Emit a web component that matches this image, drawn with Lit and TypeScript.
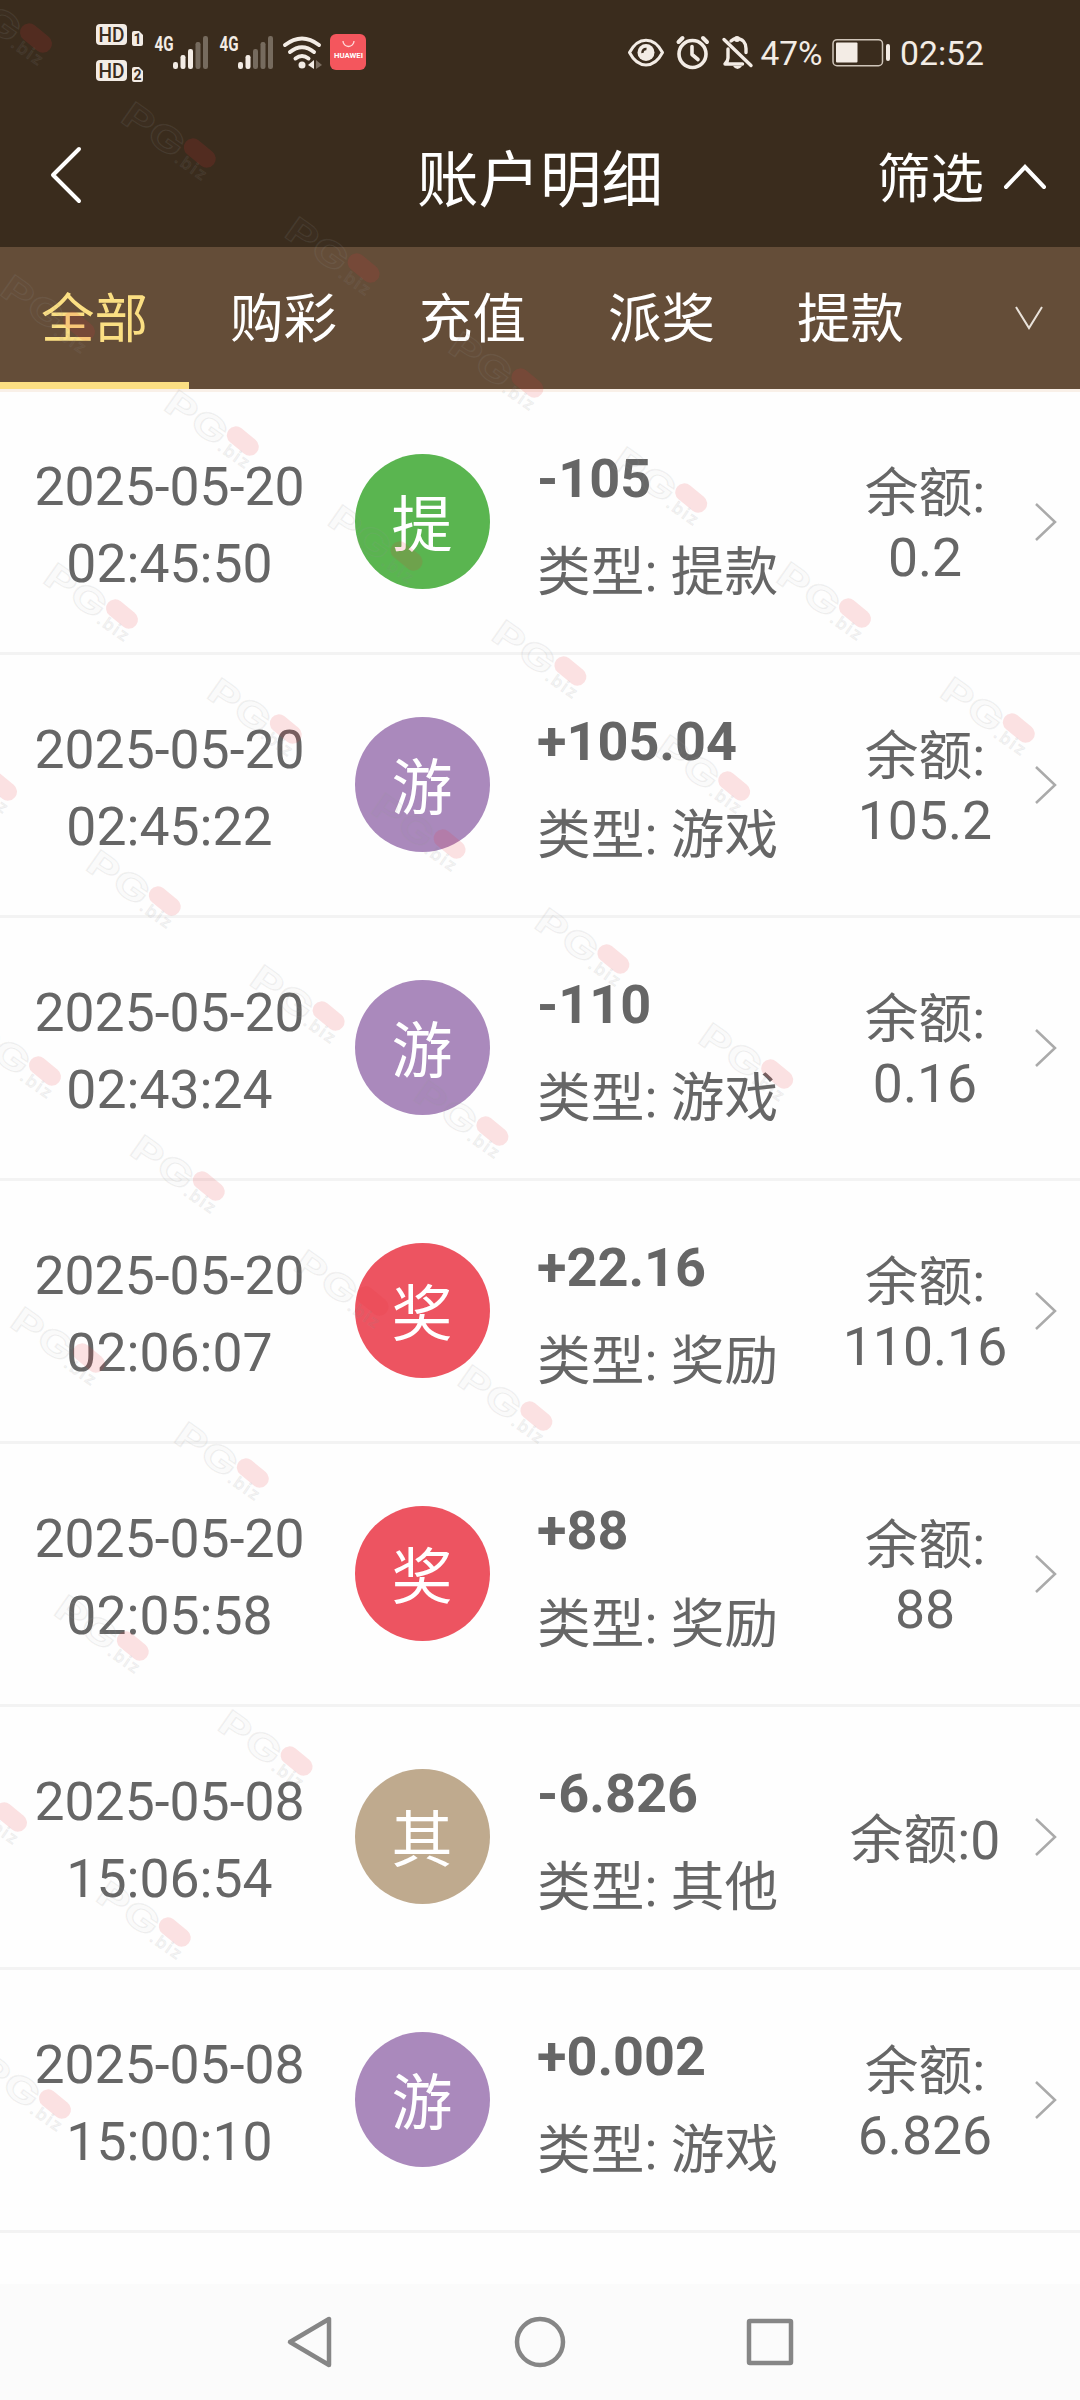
import { LitElement, html, css, svg } from "lit";
import { customElement, property } from "lit/decorators.js";

interface Entry { date: string; time: string; tag: string; tone: string; amount: string; kind: string; balance: string; inline?: boolean; }

const ENTRIES: Entry[] = [
  { date: "2025-05-20", time: "02:45:50", tag: "提", tone: "green", amount: "-105", kind: "提款", balance: "0.2" },
  { date: "2025-05-20", time: "02:45:22", tag: "游", tone: "purple", amount: "+105.04", kind: "游戏", balance: "105.2" },
  { date: "2025-05-20", time: "02:43:24", tag: "游", tone: "purple", amount: "-110", kind: "游戏", balance: "0.16" },
  { date: "2025-05-20", time: "02:06:07", tag: "奖", tone: "red", amount: "+22.16", kind: "奖励", balance: "110.16" },
  { date: "2025-05-20", time: "02:05:58", tag: "奖", tone: "red", amount: "+88", kind: "奖励", balance: "88" },
  { date: "2025-05-08", time: "15:06:54", tag: "其", tone: "tan", amount: "-6.826", kind: "其他", balance: "0", inline: true },
  { date: "2025-05-08", time: "15:00:10", tag: "游", tone: "purple", amount: "+0.002", kind: "游戏", balance: "6.826" },
];

/* Watermark pill centres: each run steps down-right from its first mark. */
const RUNS: [number, number, number][] = [
  [36, 38, 7], [79, 326, 5], [122, 614, 5], [1, 786, 4], [45, 1071, 4], [89, 1358, 2], [-31, 1531, 3], [11, 1817, 2], [55, 2104, 1],
];
const MARKS = RUNS.flatMap(([x, y, n]) => Array.from({ length: n }, (_, i) => [x + i * 163.8, y + i * 115]));

@customElement("status-bar")
export class StatusBar extends LitElement {
  static styles = css`
    :host { display: block; height: 110px; }
    svg { display: block; font-family: Roboto, sans-serif; }
  `;
  private bars(x: number, lit: number) {
    return [0, 1, 2, 3, 4].map((i) => {
      const top = [62, 55, 49, 42, 36][i];
      return svg`<rect x=${x + i * 7.5} y=${top} width="5" height=${69 - top} rx="2.2" fill="#f3ece5" opacity=${i < lit ? 1 : 0.33}/>`;
    });
  }
  render() {
    return html`<svg width="1080" height="110" viewBox="0 0 1080 110" fill="none">
      <g fill="#f3ece5">
        <rect x="96" y="24" width="31" height="21" rx="4"/><rect x="96" y="60" width="31" height="21" rx="4"/>
        <path d="M132 33q0-2 2-2h5l4 4v9q0 2-2 2h-7q-2 0-2-2zM132 69q0-2 2-2h5l4 4v9q0 2-2 2h-7q-2 0-2-2z"/>
      </g>
      <g fill="#3a2c1d" font-weight="500">
        <text x="98.500" y="42" font-size="20.500" textLength="26" lengthAdjust="spacingAndGlyphs">HD</text>
        <text x="98.500" y="78" font-size="20.500" textLength="26" lengthAdjust="spacingAndGlyphs">HD</text>
        <text x="133.500" y="44" font-size="14" font-weight="700">1</text>
        <text x="133.500" y="80" font-size="14" font-weight="700">2</text>
      </g>
      <g fill="#f3ece5" font-weight="700" font-size="20.500">
        <text x="154.500" y="51" textLength="19" lengthAdjust="spacingAndGlyphs">4G</text>
        <text x="219.500" y="51" textLength="19" lengthAdjust="spacingAndGlyphs">4G</text>
      </g>
      ${this.bars(173, 3)}${this.bars(238, 2)}
      <g stroke="#f3ece5" stroke-width="4" stroke-linecap="round">
        <path d="M285 45Q302 32 319 45M290 52Q302 42.500 314 52M295.500 58.500Q302 53.500 308.500 58.500"/>
      </g>
      <circle cx="302" cy="65" r="3.500" fill="#f3ece5"/>
      <path d="M308 65l6-5v9z" fill="#f3ece5"/><path d="M322 65l-6-5v9z" fill="#7a6d60"/>
      <rect x="330" y="34" width="36" height="36" rx="6" fill="#f4565d"/>
      <path d="M343 41a5.500 5.500 0 0 0 11 0" stroke="#ffd9d9" stroke-width="1.300"/>
      <text x="334" y="58" font-size="7" font-weight="700" fill="#fff" textLength="29" lengthAdjust="spacingAndGlyphs">HUAWEI</text>

      <g stroke="#f3ece5" stroke-linecap="round" stroke-linejoin="round">
        <path d="M629.500 52.500C638 36 654 36 662.500 52.500C654 69 638 69 629.500 52.500Z" stroke-width="3"/>
        <circle cx="692.500" cy="54" r="13.500" stroke-width="3.600"/>
        <path d="M692 46.500v8l6 5" stroke-width="3.600"/>
        <path d="M678.500 42l4-4M707 42l-4-4" stroke-width="4"/>
        <path d="M724 39.500l27 26M742.500 64H725q3-3 3-6V49M731 41q3-2.500 5-2.500c7 0 10 5 10 10V52.500" stroke-width="3.400"/>
      </g>
      <circle cx="646" cy="52.500" r="8.500" fill="#f3ece5"/><path d="M642.500 53a3.500 3.500 0 0 1 4-4" stroke="#3a2c1d" stroke-width="2.500"/>
      <circle cx="737" cy="39" r="3" fill="#f3ece5"/><path d="M733 66h9q-2 3-4.500 3t-4.500-3z" fill="#f3ece5"/>
      <text x="760.500" y="64.500" font-size="34" fill="#f3ece5" textLength="62" lengthAdjust="spacingAndGlyphs">47%</text>
      <rect x="833" y="39.700" width="49.500" height="26" rx="4" stroke="#cfc5b9" stroke-width="1.500"/>
      <rect x="836" y="42.500" width="21.500" height="20" rx="1" fill="#f3ece5"/>
      <rect x="886" y="44" width="4" height="17" rx="2" fill="#f3ece5"/>
      <text x="900" y="64.500" font-size="34" fill="#f3ece5" textLength="84" lengthAdjust="spacingAndGlyphs">02:52</text>
    </svg>`;
  }
}

@customElement("entry-row")
export class EntryRow extends LitElement {
  @property({ attribute: false }) entry!: Entry;
  static styles = css`
    :host { display: grid; grid-template-columns: 339px 168px 321px 194px 58px; align-items: center; height: 263px;
      box-sizing: border-box; border-bottom: 3px solid #f3f3f3; color: #666; font-size: 53.700px; }
    .when { text-align: center; line-height: 77px; font-size: 53.500px; padding-top: 5px; }
    .disc { width: 135px; height: 135px; border-radius: 50%; margin: 0 0 1px 16px; color: #fff; font-size: 61px; line-height: 145px; text-align: center; text-indent: -1px; }
    .green { background: #5ab550; } .purple { background: #aa89bc; } .red { background: #ed5461; } .tan { background: #bfaa8e; }
    .info { padding-left: 30px; white-space: nowrap; padding-top: 8px; }
    .amount { font-weight: 700; line-height: 94px; font-size: 54px; }
    .kind { line-height: 94px; }
    .balance { text-align: center; line-height: 64px; white-space: nowrap; padding-top: 7px; }
    .balance .num { font-size: 53.500px; }
    .stack { display: block; }
    svg { display: block; margin-left: 12px; }
  `;
  render() {
    const e = this.entry;
    return html`
      <div class="when"><div>${e.date}</div><div>${e.time}</div></div>
      <div class="disc ${e.tone}">${e.tag}</div>
      <div class="info"><div class="amount">${e.amount}</div><div class="kind">类型: ${e.kind}</div></div>
      <div class="balance">余额:<span class="num ${e.inline ? "" : "stack"}">${e.balance}</span></div>
      <svg width="24" height="40" viewBox="0 0 24 40" fill="none" stroke="#aaa" stroke-width="2.500"><path d="M2 2L21 20L2 38"/></svg>`;
  }
}

@customElement("water-mark")
export class WaterMark extends LitElement {
  static styles = css`
    :host { position: absolute; inset: 0; pointer-events: none; }
    svg { display: block; }
    text { font-family: Inter, sans-serif; }
  `;
  render() {
    return html`<svg width="1080" height="2400" viewBox="0 0 1080 2400">
      ${MARKS.map(([x, y]) => svg`<g transform="translate(${x} ${y}) rotate(35)">
        <text x="-85" y="20" font-size="35" font-weight="700" fill="#888" fill-opacity=".05" stroke="#999" stroke-opacity=".13" stroke-width="1.200" textLength="68" lengthAdjust="spacingAndGlyphs">PG</text>
        <rect x="-18" y="-9" width="36" height="18" rx="9" fill="#e8303c" opacity=".14" transform="rotate(4)"/>
        <text x="-17" y="22" font-size="17" font-weight="600" fill="#888" fill-opacity=".1" stroke="#999" stroke-opacity=".1" stroke-width=".8" textLength="35">.biz</text>
      </g>`)}
    </svg>`;
  }
}

@customElement("app-root")
export class AppRoot extends LitElement {
  static styles = css`
    :host { display: flex; flex-direction: column; position: relative; width: 1080px; height: 2400px; overflow: hidden; background: #fefefe; font-family: Roboto, "Noto Sans CJK SC", sans-serif; }
    .top { background: #3a2c1d; height: 247px; color: #fff; }
    .nav { display: grid; grid-template-columns: 270px 540px 270px; align-items: center; height: 137px; }
    .back { padding-left: 49px; padding-bottom: 5px; }
    .title { text-align: center; font-size: 61.500px; line-height: 90px; padding-top: 4px; }
    .filter { display: flex; align-items: center; gap: 19px; font-size: 53.500px; padding-left: 67px; white-space: nowrap; line-height: 82px; padding-top: 2px; }
    .filter svg { margin-bottom: 6px; }
    .tabs { display: flex; height: 142px; background: #644d38; border-bottom: 3px solid #f9f0e8; color: #fff; font-size: 53.500px; }
    .tab { width: 189px; display: flex; justify-content: center; line-height: 146px; box-sizing: border-box; }
    .active { color: #fbdf83; border-bottom: 7px solid #fbdf83; }
    .more { flex: 1; display: flex; justify-content: flex-end; align-items: center; padding-right: 37px; }
    .spacer { flex: 1; }
    .keys { height: 116px; background: #fbfbfb; display: flex; align-items: center; justify-content: center; gap: 180px; padding-right: 3px; }
    svg { display: block; }
  `;
  render() {
    return html`
      <div class="top">
        <status-bar></status-bar>
        <div class="nav">
          <div class="back"><svg width="36" height="60" viewBox="0 0 36 60" fill="none" stroke="#fff" stroke-width="4" stroke-linecap="round" stroke-linejoin="round"><path d="M30 3L4 29L30 55"/></svg></div>
          <div class="title">账户明细</div>
          <div class="filter">筛选<svg width="44" height="28" viewBox="0 0 44 28" fill="none" stroke="#fff" stroke-width="4" stroke-linecap="round"><path d="M3 24L22 4L41 24"/></svg></div>
        </div>
      </div>
      <div class="tabs">
        <div class="tab active">全部</div><div class="tab">购彩</div><div class="tab">充值</div><div class="tab">派奖</div><div class="tab">提款</div>
        <div class="more"><svg width="28" height="24" viewBox="0 0 28 24" fill="none" stroke="#e9e2da" stroke-width="2"><path d="M1 1L14 22L27 1"/></svg></div>
      </div>
      ${ENTRIES.map((e) => html`<entry-row .entry=${e}></entry-row>`)}
      <div class="spacer"></div>
      <div class="keys">
        <svg width="50" height="56" viewBox="0 0 50 56" fill="none" stroke="#868686" stroke-width="4.500" stroke-linejoin="round"><path d="M45 5V51L6 28Z"/></svg>
        <svg width="52" height="52" viewBox="0 0 52 52" fill="none" stroke="#868686" stroke-width="4.500"><circle cx="26" cy="26" r="23"/></svg>
        <svg width="48" height="48" viewBox="0 0 48 48" fill="none" stroke="#868686" stroke-width="4.500"><rect x="3" y="3" width="42" height="42" rx="1"/></svg>
      </div>
      <water-mark></water-mark>`;
  }
}
